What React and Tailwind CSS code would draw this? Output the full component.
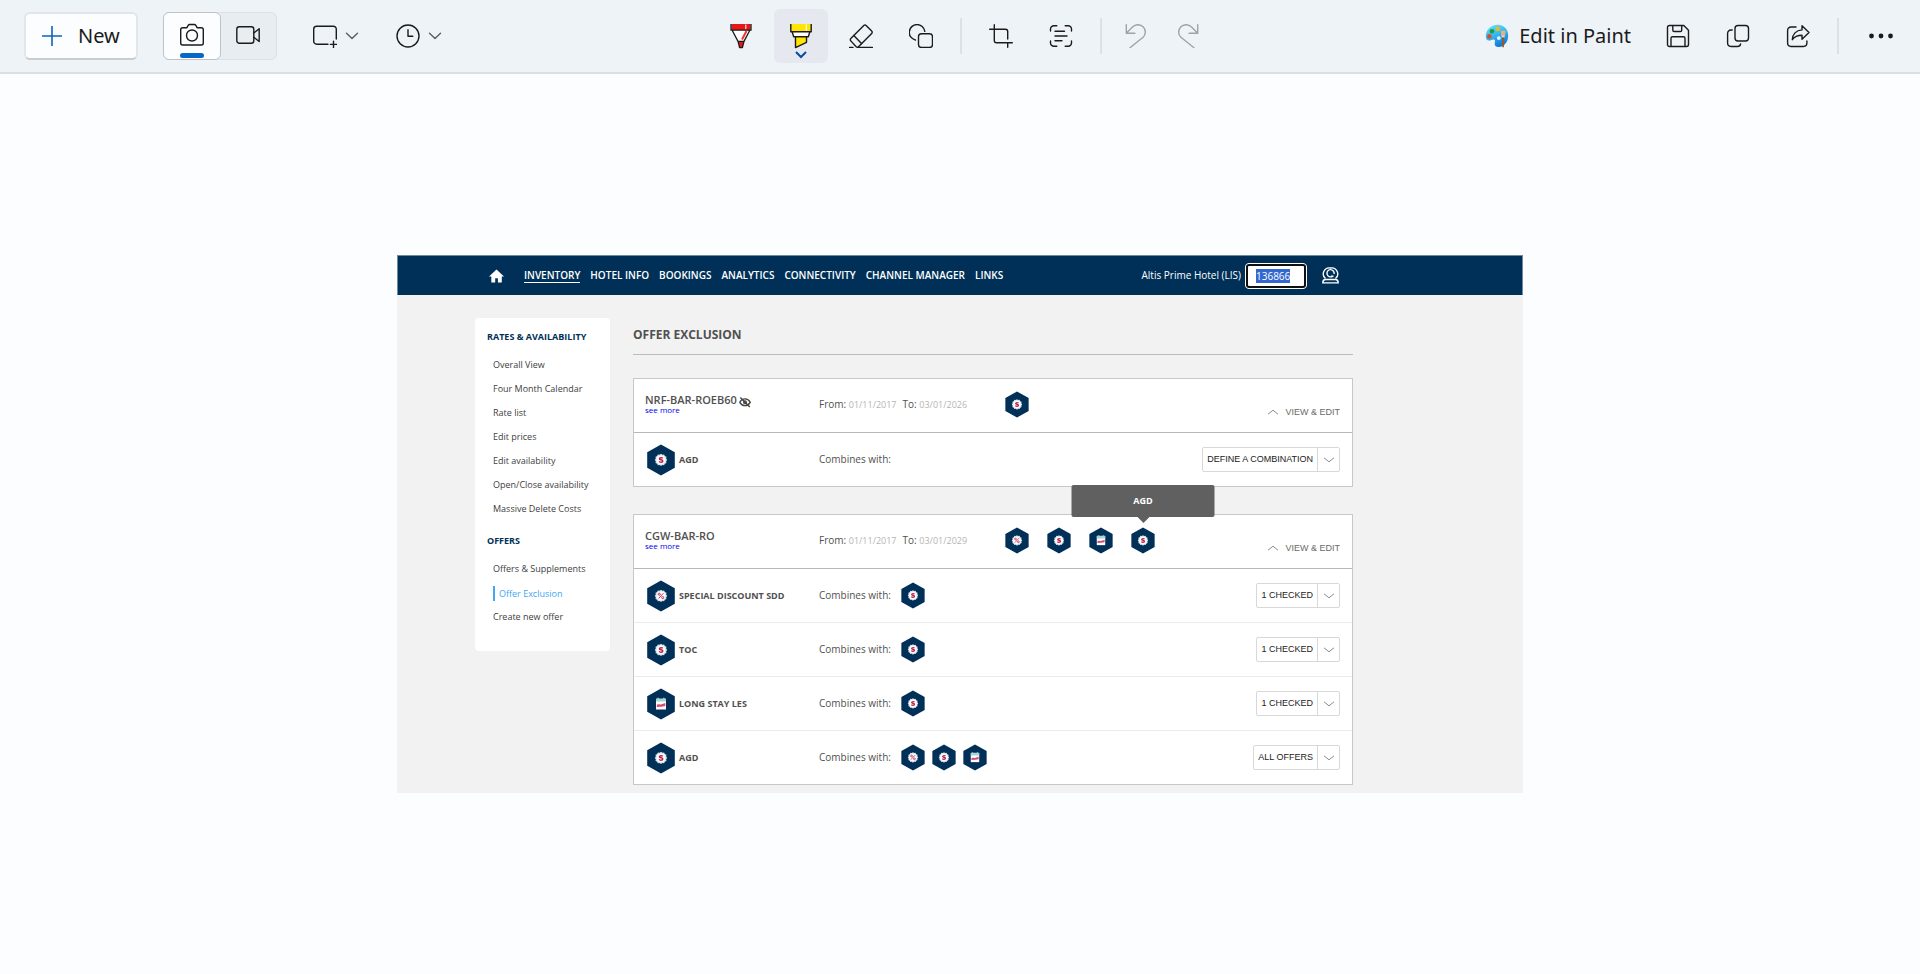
import { useEffect, useRef } from "react";

/* ---------- toolbar icons ---------- */

function Icon({ children, size = "size-6", box = "0 0 24 24" }) {
  return (
    <svg
      viewBox={box}
      className={`${size} shrink-0`}
      fill="none"
      stroke="currentColor"
      strokeWidth="1.4"
      strokeLinecap="round"
      strokeLinejoin="round"
      aria-hidden="true"
    >
      {children}
    </svg>
  );
}

const Chevron = () => (
  <svg viewBox="0 0 14 8" className="h-2 w-3.5 shrink-0 text-[#5c5f62]" fill="none" stroke="currentColor" strokeWidth="1.4" strokeLinecap="round" strokeLinejoin="round" aria-hidden="true">
    <path d="M1.5 1.2 7 6.6l5.500-5.400" />
  </svg>
);

const Camera = () => (
  <Icon>
    <path d="M2.700 4.700h4.200l1.300-2.300c.3-.5.8-.9 1.400-.9h4.800c.6 0 1.100.4 1.400.9l1.300 2.300h4.200c1.100 0 2 .9 2 2v13.300c0 1.100-.9 2-2 2H2.700c-1.100 0-2-.9-2-2V6.700c0-1.100.9-2 2-2Z" />
    <circle cx="12" cy="12.500" r="5.500" />
  </Icon>
);

const Video = () => (
  <Icon>
    <rect x=".8" y="3.800" width="17" height="16.500" rx="2.500" />
    <path d="m17.800 10 5.400-4.300v12.800L17.800 14.200" />
  </Icon>
);

const SnipShape = () => (
  <Icon>
    <path d="M15 20.200H3.700a3 3 0 0 1-3-3V5.200a3 3 0 0 1 3-3h16.600a3 3 0 0 1 3 3V15" />
    <path d="M20.500 17.300v6.200M17.400 20.400h6.200" />
  </Icon>
);

const Clock = () => (
  <Icon>
    <circle cx="12" cy="12" r="11" />
    <path d="M12 5.800v6.400h4.800" />
  </Icon>
);

const Pen = () => (
  <svg viewBox="0 0 24 26" className="h-[26px] w-6" fill="none" aria-hidden="true">
    <path d="M2.500 1h19v6h-19Z" fill="#e81717" />
    <path d="M3 7.200h18l-5.600 11H8.600Z" fill="#fff" />
    <path d="M16.800 1.500v4.800" stroke="#fff" strokeWidth="1" />
    <path d="m17.500 8-4.500 8.500" stroke="#ee3333" strokeWidth="2" />
    <path d="M9.300 18.500h5.400l-1.200 6.200h-3Z" fill="#e81717" />
    <path d="M2 1v6.200h20V1M3.200 7.200 9 18.400l1.600 6.300h2.800l1.600-6.300 5.800-11.200M9 18.400h6" stroke="#1b1b1b" strokeWidth="1.300" strokeLinejoin="round" />
  </svg>
);

const Highlighter = () => (
  <svg viewBox="0 0 24 26" className="h-[26px] w-6" fill="none" aria-hidden="true">
    <path d="M2 1h20v7.500H2Z" fill="#ffe500" />
    <path d="M17.300 1.500v6.500" stroke="#fff" strokeWidth="1.200" />
    <path d="M3 9h18l-1.500 4.500h-15Z" fill="#fff" />
    <path d="M6.600 13.700h10.800v5.500L6.600 24.500Z" fill="#ffe500" />
    <path d="M1.800 1v7.800h20.400V1M3.200 9l1.500 4.700h14.600L20.800 9M6.500 13.700v10.900l11-5.300v-5.600" stroke="#1b1b1b" strokeWidth="1.400" strokeLinejoin="round" />
  </svg>
);

const Eraser = () => (
  <Icon>
    <path d="m1.800 14.600 13-13.200a1.600 1.600 0 0 1 2.300 0l5.600 5.700a1.600 1.600 0 0 1 0 2.300L9.500 22.800a1.600 1.600 0 0 1-2.300 0l-5.400-5.900a1.600 1.600 0 0 1 0-2.300Z" />
    <path d="m4.800 11.600 7.700 8M.4 23.500H4M9 23.500h14.500" />
  </Icon>
);

const Shapes = () => (
  <Icon>
    <path d="M6.400 16A7.800 7.800 0 1 1 15.800 7.400" />
    <rect x="9.500" y="9.800" width="14" height="13.700" rx="3" />
  </Icon>
);

const Crop = () => (
  <Icon>
    <path d="M5.300.7v15.800a2.200 2.200 0 0 0 2.200 2.200h15.800M.7 5.300h15.800a2.200 2.200 0 0 1 2.200 2.200V15M18.700 19.500v3.800" />
  </Icon>
);

const TextScan = () => (
  <Icon>
    <path d="M1.500 7V5a3.300 3.300 0 0 1 3.300-3.300h3M16.200 1.700h3A3.300 3.300 0 0 1 22.500 5v2M22.500 17v2a3.300 3.300 0 0 1-3.300 3.300h-3M7.800 22.300h-3A3.300 3.300 0 0 1 1.500 19v-2M6 7.200h9.500M6 12h12M6 16.700h7" />
  </Icon>
);

const Undo = () => (
  <Icon>
    <path d="M2.300.7v8.600h8.600M2.500 9l6-6c3.200-3.100 7.700-3 10.600-.2 3 3 3 7.400 0 10.400L6 23.700" />
  </Icon>
);

const Redo = () => (
  <Icon>
    <path d="M21.700.7v8.600h-8.600M21.500 9l-6-6c-3.200-3.100-7.700-3-10.600-.2-3 3-3 7.400 0 10.400L18 23.700" />
  </Icon>
);

const Palette = () => (
  <svg viewBox="0 0 24 24" className="size-6 shrink-0" aria-hidden="true">
    <defs>
      <linearGradient id="palette" x1="0.300" y1="0" x2="0.700" y2="1">
        <stop offset="0" stopColor="#5fe0fb" />
        <stop offset="0.500" stopColor="#2eb0f0" />
        <stop offset="1" stopColor="#0f6fd0" />
      </linearGradient>
    </defs>
    <path d="M12.500.8C5.800.8.8 6 .8 12.300c0 2.600 1.200 4.300 3.400 4.300 2 0 2.900-1.500 4.700-1 1.600.4 1 2 .8 3.400-.4 2.700 1.100 4 4 4 5.400 0 9.500-5 9.500-11.400C23.200 5.300 18.600.8 12.500.8Zm1.300 11.400a1.900 1.900 0 1 1 0 3.800 1.900 1.900 0 0 1 0-3.800Z" fill="url(#palette)" />
    <circle cx="4.300" cy="12.400" r="2.300" fill="#d4502a" />
    <circle cx="7" cy="7.200" r="2.300" fill="#1e9a3a" />
    <circle cx="12.800" cy="5" r="2.200" fill="#f2b51c" />
    <path d="M15.700 6.800h5l-.7 5h-3.600Z" fill="#e5b184" />
    <path d="M16.600 11.400h3v2.200h-3Z" fill="#d9dde0" />
    <path d="M16.900 13.400h2.400l-.4 9.800h-1.600Z" fill="#9a5a25" />
  </svg>
);

const Save = () => (
  <Icon>
    <path d="M3.500 1.500h14.300l4.700 4.700v14.300a2 2 0 0 1-2 2h-17a2 2 0 0 1-2-2v-17a2 2 0 0 1 2-2Z" />
    <path d="M6.800 1.700v4.500a1.300 1.300 0 0 0 1.300 1.300h6.300a1.300 1.300 0 0 0 1.300-1.300V1.700M5 22.300v-8a1.500 1.500 0 0 1 1.500-1.500h11a1.500 1.500 0 0 1 1.500 1.500v8" />
  </Icon>
);

const Copy = () => (
  <Icon>
    <rect x="9" y="1.500" width="13.500" height="15.500" rx="3" />
    <path d="M6.200 6H5a3.400 3.400 0 0 0-3.400 3.400v9.700a3.400 3.400 0 0 0 3.400 3.400h6.300c1.700 0 3.100-1 3.300-2.600" />
  </Icon>
);

const Share = () => (
  <Icon>
    <path d="M10 3H5a3.400 3.400 0 0 0-3.400 3.400v12.700A3.400 3.400 0 0 0 5 22.500h12.500a3.400 3.400 0 0 0 3.400-3.400V17" />
    <path d="m16 1.700 7 6.800-7 6.800v-4c-4.300 0-7.300 1-9.700 4.400.3-5.200 3.700-9.300 9.700-9.800Z" />
  </Icon>
);

function Tool({ label, children, dim }) {
  return (
    <button type="button" aria-label={label} className={`flex h-[54px] items-center justify-center ${dim ? "w-9 text-[#9fa3a7]" : "w-[54px]"}`}>
      {children}
    </button>
  );
}

const Divider = () => <span className="h-9 w-0.5 shrink-0 bg-[#dde1e6]" />;

function Toolbar() {
  return (
    <header className="grid h-[74px] grid-cols-[1fr_auto_1fr] items-center border-b-2 border-[#dbdfe4] bg-[#eef3f8] px-6 text-[#1b1b1b]">
      <div className="flex items-center">
        <button type="button" className="flex h-12 w-[114px] items-center gap-4 rounded-md border-2 border-[#e2e6ea] border-b-[#c8ccd0] bg-[#fcfdff] pl-4 text-xl">
          <svg viewBox="0 0 20 20" className="size-5" stroke="#0a63c2" strokeWidth="1.600" aria-hidden="true">
            <path d="M10 0v20M0 10h20" />
          </svg>
          New
        </button>
        <div className="ml-[25px] flex h-12 w-[114px] rounded-md border border-[#dde1e5] bg-[#e8edf1]">
          <button type="button" aria-label="Snip" aria-pressed="true" className="-m-px flex w-[58px] flex-col items-center gap-1.5 rounded-md border border-[#bfc3c6] bg-[#fcfdff] pt-2.5">
            <Camera />
            <span className="h-[5px] w-6 rounded-full bg-[#0a66c4]" />
          </button>
          <button type="button" aria-label="Record" className="flex flex-1 justify-center pt-2.5">
            <Video />
          </button>
        </div>
        <button type="button" aria-label="Snipping area" className="ml-9 flex items-center gap-2">
          <SnipShape />
          <Chevron />
        </button>
        <button type="button" aria-label="Delay snip" className="ml-[37px] flex items-center gap-2">
          <Clock />
          <Chevron />
        </button>
      </div>

      <div className="flex items-center">
        <div className="flex gap-1.5">
          <Tool label="Ballpoint pen"><Pen /></Tool>
          <button type="button" aria-label="Highlighter" aria-pressed="true" className="flex h-[54px] w-[54px] flex-col items-center gap-0.5 rounded-md bg-[#e5e8ee] pt-3.5">
            <Highlighter />
            <svg viewBox="0 0 12 8" className="h-2 w-3 shrink-0" fill="none" stroke="#0b4aa0" strokeWidth="2" aria-hidden="true">
              <path d="m1 1 5 5 5-5" />
            </svg>
          </button>
          <Tool label="Eraser"><Eraser /></Tool>
          <Tool label="Shapes"><Shapes /></Tool>
        </div>
        <span className="flex px-3"><Divider /></span>
        <div className="flex gap-1.5">
          <Tool label="Crop"><Crop /></Tool>
          <Tool label="Text actions"><TextScan /></Tool>
        </div>
        <span className="flex pl-3 pr-4"><Divider /></span>
        <div className="flex gap-4">
          <Tool label="Undo" dim><Undo /></Tool>
          <Tool label="Redo" dim><Redo /></Tool>
        </div>
      </div>

      <div className="flex items-center justify-end">
        <button type="button" className="mr-5 flex items-center gap-2.5 text-xl whitespace-nowrap">
          <Palette />
          Edit in Paint
        </button>
        <div className="flex gap-1.5">
          <Tool label="Save"><Save /></Tool>
          <Tool label="Copy"><Copy /></Tool>
          <Tool label="Share"><Share /></Tool>
        </div>
        <span className="flex pl-3 pr-[27px]"><Divider /></span>
        <button type="button" aria-label="See more" className="flex h-[54px] w-[30px] items-center justify-center">
          <svg viewBox="0 0 24 6" className="h-1.5 w-6" fill="currentColor" aria-hidden="true">
            <circle cx="2.500" cy="3" r="2.400" />
            <circle cx="12" cy="3" r="2.400" />
            <circle cx="21.500" cy="3" r="2.400" />
          </svg>
        </button>
      </div>
    </header>
  );
}

/* ---------- hotel extranet ---------- */

const burst = "M14 9.300l1.700 1.300 2.100-.4.900 2 2 .9-.4 2.100 1.300 1.600-1.300 1.700.4 2.100-2 .9-.9 2-2.100-.4L14 24.400l-1.700-1.300-2.100.4-.9-2-2-.9.400-2.100-1.300-1.700 1.300-1.600-.4-2.100 2-.9.9-2 2.100.4Z";

function Hex({ kind, small }) {
  return (
    <svg viewBox="0 0 28 32" className={`${small ? "h-[27px] w-6" : "h-8 w-7"} shrink-0`} role="img" aria-label={kind}>
      <path d="M14 .5 27.800 8.200v15.600L14 31.500.2 23.800V8.200Z" fill="#003057" />
      {kind === "calendar" ? (
        <g>
          <path d="M9 11h10v10.500H9Z" fill="#fff" />
          <path d="M9 10.500h1.500v-.8h1.400v.8h4.200v-.8h1.400v.8H19v3H9Z" fill="#a5d6d3" />
          <path d="M9.800 19v-2.400l2-.3 2 .2 4.500-1.500v3l-4 .8Z" fill="#d84a78" />
        </g>
      ) : (
        <g transform="translate(2.500 2.100) scale(.82)">
          <path d={burst} fill="#cfe8e6" />
          <circle cx="14" cy="16.800" r="5.400" fill="#fff" />
          {kind === "percent" ? (
            <g stroke="#c5265c" strokeWidth="1.200" fill="none">
              <path d="m17 13.600-6 6.400" />
              <circle cx="11.900" cy="14.800" r="1.300" />
              <circle cx="16.100" cy="18.900" r="1.300" />
            </g>
          ) : (
            <path d="M16.200 14.900c-.4-.5-1.100-.8-2.100-.8-1.200 0-2 .5-2 1.300 0 1.900 4.100.8 4.100 2.800 0 .9-.9 1.400-2.200 1.400-1 0-1.800-.3-2.300-1" stroke="#c5164f" strokeWidth="1.800" fill="none" />
          )}
        </g>
      )}
    </svg>
  );
}

const navLinks = ["INVENTORY", "HOTEL INFO", "BOOKINGS", "ANALYTICS", "CONNECTIVITY", "CHANNEL MANAGER", "LINKS"];

function NavBar() {
  const code = useRef(null);
  useEffect(() => {
    code.current.focus();
    code.current.select();
  }, []);
  return (
    <div className="flex h-10 items-center border-x border-t border-[#6d8b9c] bg-[#003057] pl-[91px] pr-[183px] text-white">
      <a href="#home" aria-label="Home">
        <svg viewBox="0 0 15 14" className="h-3.5 w-[15px]" fill="#fff" aria-hidden="true">
          <path d="M7.500.5 15 7.600h-2.200v5.900H8.900V9.300H6.200v4.200H2.300V7.600H0Z" />
        </svg>
      </a>
      <nav className="ml-5 flex gap-2.5 text-[10px] leading-[13px] font-semibold whitespace-nowrap">
        {navLinks.map((name, i) => (
          <a key={name} href="#nav" className={i === 0 ? "border-b border-white" : "border-b border-transparent"}>
            {name}
          </a>
        ))}
      </nav>
      <div className="ml-auto flex items-center">
        <label htmlFor="hotel" className="text-[10px] whitespace-nowrap">Altis Prime Hotel (LIS)</label>
        <input
          id="hotel"
          ref={code}
          defaultValue="136866"
          className="ml-1 h-[26px] w-[62px] rounded border border-white bg-white px-2.5 text-[10px] text-black outline-2 -outline-offset-3 outline-[#101010] selection:bg-[#3367d1] selection:text-white"
        />
        <button type="button" aria-label="Account" className="ml-[15px]">
          <svg viewBox="0 0 17 17" className="size-[17px]" fill="none" stroke="#fff" strokeWidth="1.400" aria-hidden="true">
            <path d="M3.500 11.500A6 6 0 0 1 8.500 1a6 6 0 0 1 5 10.500" />
            <path d="M10.500 9.300a3.600 3.600 0 1 1 1.600-2.300" />
            <path d="M9 9.200h2.500M.8 15.900c0-2 .8-3.400 2.700-3.400h10c1.900 0 2.700 1.400 2.700 3.400Z" />
          </svg>
        </button>
      </div>
    </div>
  );
}

function SideGroup({ title, items, className }) {
  return (
    <div className={className}>
      <h2 className="mb-2 text-[9px] leading-4 font-bold text-[#003057]">{title}</h2>
      <ul className="pl-1.5 text-[9px] text-[#404040]">
        {items.map((item) => (
          <li key={item} className="flex h-6 items-center">
            {item === "Offer Exclusion" ? (
              <a href="#side" aria-current="page" className="border-l-2 border-[#42a5f5] pl-1 leading-[15px] text-[#42a5f5]">{item}</a>
            ) : (
              <a href="#side">{item}</a>
            )}
          </li>
        ))}
      </ul>
    </div>
  );
}

function Picker({ value, label }) {
  return (
    <span className="relative ml-auto flex h-[25px] rounded-xs border border-[#d8d8d8] bg-white">
      <select aria-label={label} defaultValue={value} className="field-sizing-content appearance-none pr-[26px] pl-1 font-['Liberation_Sans',sans-serif] text-[9px] text-[#222]">
        <option>{value}</option>
      </select>
      <span className="pointer-events-none absolute inset-y-0 right-0 flex w-[22px] items-center justify-center border-l border-[#d8d8d8]">
        <svg viewBox="0 0 12 6" className="h-1.5 w-3" fill="none" stroke="#8a8a8a" aria-hidden="true">
          <path d="m1 .8 5 4 5-4" />
        </svg>
      </span>
    </span>
  );
}

function OfferCard({ name, hidden, to, icons, tip, rows }) {
  return (
    <section className="border border-[#c8c8c8] bg-white text-[#505050]">
      <div className="flex h-[54px] border-b border-[#b8b8b8] pr-3 pl-[11px]">
        <div className="w-[174px] pt-3.5">
          <h2 className="flex h-[13px] items-center gap-0.5 text-[11px] leading-[13px] font-semibold">
            {name}
            {hidden && (
              <svg viewBox="0 0 12 12" className="mt-1 size-3" fill="none" stroke="#444" strokeWidth="1.400" aria-label="Hidden">
                <path d="M.8 6.300C2 4 3.800 2.900 6 2.900s4 1.100 5.200 3.400C10 8.500 8.200 9.600 6 9.600S2 8.500.8 6.300Z" />
                <circle cx="6" cy="6.200" r="1.300" />
                <path d="m1.300 1.500 9.500 9.500" />
              </svg>
            )}
          </h2>
          <a href="#more" className="block text-[8px] leading-[8px] text-[#0000ee]">see more</a>
        </div>
        <p className="w-[186px] pt-[17px] text-[10px] leading-4 whitespace-nowrap">
          From: <span className="text-[9px] text-[#b5b5b5]">01/11/2017</span>
          <span className="ml-1.5">To:</span> <span className="text-[9px] text-[#b5b5b5]">{to}</span>
        </p>
        <div className="flex gap-[18px] pt-3">
          {icons.map((kind, i) => (
            <span key={i} className="relative h-[27px]">
              <Hex kind={kind} small />
              {tip && i === icons.length - 1 && (
                <span role="tooltip" className="absolute bottom-full left-1/2 mb-1 flex -translate-x-1/2 flex-col items-center">
                  <span className="flex h-8 w-[143px] items-center justify-center rounded-xs bg-[#606060] text-[9px] font-bold text-white">{tip}</span>
                  <svg viewBox="0 0 12 6" className="h-1.5 w-3" fill="#606060" aria-hidden="true">
                    <path d="M0 0h12L6 6Z" />
                  </svg>
                </span>
              )}
            </span>
          ))}
        </div>
        <button type="button" className="mt-3 ml-auto flex items-center gap-1.5 self-center font-['Liberation_Sans',sans-serif] text-[9px] leading-3 whitespace-nowrap text-[#6a6a6a]">
          <svg viewBox="0 0 12 6" className="h-1.5 w-3" fill="none" stroke="#8a8a8a" aria-hidden="true">
            <path d="m1 5.200 5-4 5 4" />
          </svg>
          VIEW &amp; EDIT
        </button>
      </div>
      {rows.map((row) => (
        <div key={row.name} className="flex h-[54px] items-center border-b border-[#ebebeb] pr-3 pl-[11px] last:h-[53px] last:border-b-0">
          <div className="flex w-[174px] items-center gap-1 pl-0.5">
            <Hex kind={row.kind} />
            <h3 className="text-[9px] font-bold whitespace-nowrap">{row.name}</h3>
          </div>
          <p className="w-[82px] text-[10px] whitespace-nowrap">Combines with:</p>
          <div className="flex gap-[7px]">
            {row.combos.map((kind, i) => (
              <Hex key={i} kind={kind} small />
            ))}
          </div>
          <Picker value={row.value} label={`Combinations of ${row.name}`} />
        </div>
      ))}
    </section>
  );
}

const roebRows = [{ name: "AGD", kind: "dollar", combos: [], value: "DEFINE A COMBINATION" }];
const cgwRows = [
  { name: "SPECIAL DISCOUNT SDD", kind: "percent", combos: ["dollar"], value: "1 CHECKED" },
  { name: "TOC", kind: "dollar", combos: ["dollar"], value: "1 CHECKED" },
  { name: "LONG STAY LES", kind: "calendar", combos: ["dollar"], value: "1 CHECKED" },
  { name: "AGD", kind: "dollar", combos: ["percent", "dollar", "calendar"], value: "ALL OFFERS" },
];

function Extranet() {
  return (
    <div className="w-full max-w-[1126px] bg-[#f2f2f2] font-['Open_Sans',sans-serif]">
      <NavBar />
      <div className="flex items-start gap-[23px] pr-[170px] pb-2 pl-[78px]">
        <aside className="mt-[23px] w-[135px] shrink-0 rounded-sm bg-white px-3 pt-[11px] pb-[22px]">
          <SideGroup
            title="RATES & AVAILABILITY"
            items={["Overall View", "Four Month Calendar", "Rate list", "Edit prices", "Edit availability", "Open/Close availability", "Massive Delete Costs"]}
          />
          <SideGroup className="mt-3" title="OFFERS" items={["Offers & Supplements", "Offer Exclusion", "Create new offer"]} />
        </aside>
        <main className="min-w-0 flex-1">
          <h1 className="mt-8 border-b border-[#bbb] pb-[11px] text-xs leading-4 font-bold text-[#505050]">OFFER EXCLUSION</h1>
          <div className="mt-[23px] flex flex-col gap-[27px]">
            <OfferCard name="NRF-BAR-ROEB60" hidden to="03/01/2026" icons={["dollar"]} rows={roebRows} />
            <OfferCard name="CGW-BAR-RO" to="03/01/2029" icons={["percent", "dollar", "calendar", "dollar"]} tip="AGD" rows={cgwRows} />
          </div>
        </main>
      </div>
    </div>
  );
}

export default function App() {
  return (
    <div className="flex min-h-screen flex-col bg-[#fcfdff] font-['Noto_Sans',sans-serif]">
      <Toolbar />
      <div className="flex flex-1 items-center justify-center">
        <Extranet />
      </div>
    </div>
  );
}
